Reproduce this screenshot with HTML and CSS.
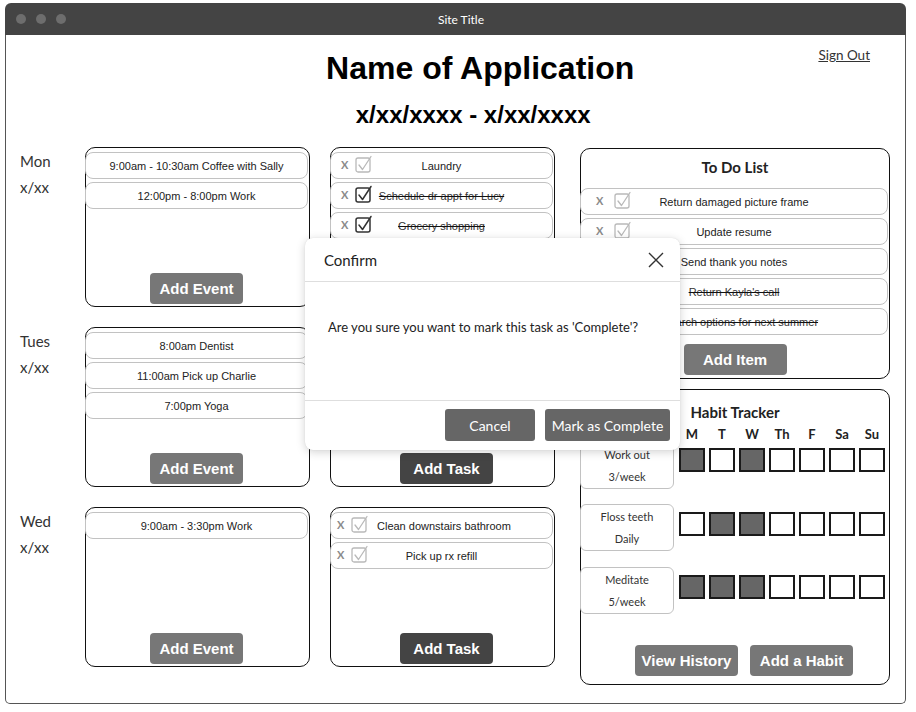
FILE: index.html
```html
<!DOCTYPE html>
<html>
<head>
<meta charset="utf-8">
<title>Site Title</title>
<link rel="stylesheet" href="styles.css">
</head>
<body>
<div class="window">
  <div class="titlebar">
    <div class="dots"><span></span><span></span><span></span></div>
    <div class="site-title">Site Title</div>
    <div></div>
  </div>
  <div class="content">
    <header class="header">
      <div class="titles">
        <h1>Name of Application</h1>
        <h2>x/xx/xxxx - x/xx/xxxx</h2>
      </div>
      <a class="signout" href="#">Sign Out</a>
    </header>

    <main class="main">
      <section class="days">
        <div class="day">
          <div class="day-label">Mon<br>x/xx</div>
          <div class="panel events">
            <div class="item">9:00am - 10:30am Coffee with Sally</div>
            <div class="item">12:00pm - 8:00pm Work</div>
            <button class="btn btn-light">Add Event</button>
          </div>
          <div class="panel tasks tasks-a">
            <div class="item task"><span class="tctl"><span class="x">X</span><svg class="cb off" viewBox="0 0 18 20"><rect x="1" y="4" width="14" height="14" rx="2"/><path d="M4 11 L7.5 15.5 L16 2.5"/></svg></span><span class="ttext">Laundry</span><span></span></div>
            <div class="item task"><span class="tctl"><span class="x">X</span><svg class="cb on" viewBox="0 0 18 20"><rect x="1" y="4" width="14" height="14" rx="2"/><path d="M4 11 L7.5 15.5 L16 2.5"/></svg></span><span class="ttext done">Schedule dr appt for Lucy</span><span></span></div>
            <div class="item task"><span class="tctl"><span class="x">X</span><svg class="cb on" viewBox="0 0 18 20"><rect x="1" y="4" width="14" height="14" rx="2"/><path d="M4 11 L7.5 15.5 L16 2.5"/></svg></span><span class="ttext done">Grocery shopping</span><span></span></div>
            <button class="btn btn-dark">Add Task</button>
          </div>
        </div>

        <div class="day">
          <div class="day-label">Tues<br>x/xx</div>
          <div class="panel events">
            <div class="item">8:00am Dentist</div>
            <div class="item">11:00am Pick up Charlie</div>
            <div class="item">7:00pm Yoga</div>
            <button class="btn btn-light">Add Event</button>
          </div>
          <div class="panel tasks tasks-a">
            <div class="item task"><span class="tctl"><span class="x">X</span><svg class="cb off" viewBox="0 0 18 20"><rect x="1" y="4" width="14" height="14" rx="2"/><path d="M4 11 L7.5 15.5 L16 2.5"/></svg></span><span class="ttext">Call the plumber</span><span></span></div>
            <div class="item task"><span class="tctl"><span class="x">X</span><svg class="cb off" viewBox="0 0 18 20"><rect x="1" y="4" width="14" height="14" rx="2"/><path d="M4 11 L7.5 15.5 L16 2.5"/></svg></span><span class="ttext">Pay bills</span><span></span></div>
            <button class="btn btn-dark">Add Task</button>
          </div>
        </div>

        <div class="day">
          <div class="day-label">Wed<br>x/xx</div>
          <div class="panel events">
            <div class="item">9:00am - 3:30pm Work</div>
            <button class="btn btn-light">Add Event</button>
          </div>
          <div class="panel tasks tasks-b">
            <div class="item task"><span class="tctl"><span class="x">X</span><svg class="cb off" viewBox="0 0 18 20"><rect x="1" y="4" width="14" height="14" rx="2"/><path d="M4 11 L7.5 15.5 L16 2.5"/></svg></span><span class="ttext">Clean downstairs bathroom</span><span></span></div>
            <div class="item task"><span class="tctl"><span class="x">X</span><svg class="cb off" viewBox="0 0 18 20"><rect x="1" y="4" width="14" height="14" rx="2"/><path d="M4 11 L7.5 15.5 L16 2.5"/></svg></span><span class="ttext">Pick up rx refill</span><span></span></div>
            <button class="btn btn-dark">Add Task</button>
          </div>
        </div>
      </section>

      <aside class="side">
        <div class="panel todo tasks-c">
          <div class="box-title">To Do List</div>
          <div class="item task"><span class="tctl"><span class="x">X</span><svg class="cb off" viewBox="0 0 18 20"><rect x="1" y="4" width="14" height="14" rx="2"/><path d="M4 11 L7.5 15.5 L16 2.5"/></svg></span><span class="ttext">Return damaged picture frame</span><span></span></div>
          <div class="item task"><span class="tctl"><span class="x">X</span><svg class="cb off" viewBox="0 0 18 20"><rect x="1" y="4" width="14" height="14" rx="2"/><path d="M4 11 L7.5 15.5 L16 2.5"/></svg></span><span class="ttext">Update resume</span><span></span></div>
          <div class="item task"><span class="tctl"><span class="x">X</span><svg class="cb off" viewBox="0 0 18 20"><rect x="1" y="4" width="14" height="14" rx="2"/><path d="M4 11 L7.5 15.5 L16 2.5"/></svg></span><span class="ttext">Send thank you notes</span><span></span></div>
          <div class="item task"><span class="tctl"><span class="x">X</span><svg class="cb on" viewBox="0 0 18 20"><rect x="1" y="4" width="14" height="14" rx="2"/><path d="M4 11 L7.5 15.5 L16 2.5"/></svg></span><span class="ttext done">Return Kayla's call</span><span></span></div>
          <div class="item task"><span class="tctl"><span class="x">X</span><svg class="cb on" viewBox="0 0 18 20"><rect x="1" y="4" width="14" height="14" rx="2"/><path d="M4 11 L7.5 15.5 L16 2.5"/></svg></span><span class="ttext done">Research options for next summer</span><span></span></div>
          <button class="btn btn-light btn-wide">Add Item</button>
        </div>

        <div class="panel habits">
          <div class="box-title habit-title">Habit Tracker</div>
          <div class="habit-grid">
            <span></span>
            <span class="dname">M</span><span class="dname">T</span><span class="dname">W</span><span class="dname">Th</span><span class="dname">F</span><span class="dname">Sa</span><span class="dname">Su</span>

            <div class="hlabel">Work out<br>3/week</div>
            <span class="sq fill"></span><span class="sq"></span><span class="sq fill"></span><span class="sq"></span><span class="sq"></span><span class="sq"></span><span class="sq"></span>

            <div class="hlabel">Floss teeth<br>Daily</div>
            <span class="sq"></span><span class="sq fill"></span><span class="sq fill"></span><span class="sq"></span><span class="sq"></span><span class="sq"></span><span class="sq"></span>

            <div class="hlabel">Meditate<br>5/week</div>
            <span class="sq fill"></span><span class="sq fill"></span><span class="sq fill"></span><span class="sq"></span><span class="sq"></span><span class="sq"></span><span class="sq"></span>
          </div>
          <div class="habit-actions">
            <button class="btn btn-light btn-wide">View History</button>
            <button class="btn btn-light btn-wide">Add a Habit</button>
          </div>
        </div>
      </aside>
    </main>

    <div class="modal">
      <div class="modal-head">
        <span>Confirm</span>
        <svg class="close" viewBox="0 0 16 16"><path d="M1 1 L15 15 M15 1 L1 15"/></svg>
      </div>
      <div class="modal-body">Are you sure you want to mark this task as 'Complete'?</div>
      <div class="modal-foot">
        <button class="mbtn mbtn-cancel">Cancel</button>
        <button class="mbtn mbtn-ok">Mark as Complete</button>
      </div>
    </div>
  </div>
</div>
</body>
</html>
```

FILE: styles.css
```css
* { box-sizing: border-box; }

body {
  margin: 0;
  padding: 3px 10px 0 5px;
  background: #fff;
  font-family: "Liberation Sans", Arial, sans-serif;
}

.window {
  width: 901px;
  height: 701px;
  display: flex;
  flex-direction: column;
}

.titlebar {
  height: 32px;
  background: #444;
  border-radius: 6px 6px 0 0;
  display: grid;
  grid-template-columns: 1fr auto 1fr;
  align-items: center;
}

.dots { display: flex; gap: 10px; padding-left: 11px; }
.dots span { width: 10px; height: 10px; border-radius: 50%; background: #6d6d6d; }

.site-title {
  color: #fff;
  font: 12px "Lato", sans-serif;
  padding-left: 11px;
}

.content {
  flex: 1;
  position: relative;
  border: 1px solid #555;
  border-top: 0;
  border-radius: 0 0 5px 5px;
  padding: 0 15px 0 14px;
}

/* header */
.header { display: flex; }
.titles { flex: 1; text-align: center; padding-left: 122px; }
.titles h1 {
  margin: 15px 0 0;
  font: bold 32px/37px "Liberation Sans", Arial, sans-serif;
  color: #000;
}
.titles h2 {
  margin: 14px 0 0;
  padding-right: 14px;
  font: bold 24px/28px "Liberation Sans", Arial, sans-serif;
  color: #000;
}
.signout {
  margin: 11px 20px 0 0;
  font: 13.5px/18px "Lato", sans-serif;
  color: #333;
  height: 18px;
  text-decoration: underline;
}

/* main */
.main { display: flex; gap: 25px; margin-top: 18px; }
.days { display: flex; flex-direction: column; gap: 20px; }
.day { display: flex; height: 160px; }
.day-label {
  width: 65px;
  padding-top: 1px;
  font: 15px/26px "Lato", sans-serif;
  color: #333;
}

.panel {
  width: 225px;
  border: 1px solid #111;
  border-radius: 10px;
  display: flex;
  flex-direction: column;
  padding: 4px 0 2px;
}
.tasks { margin-left: 20px; }

.item {
  height: 27px;
  margin: 0 1px 3px -1px;
  border: 1px solid #c2c2c2;
  border-radius: 8px;
  font: 11px/26px "Liberation Sans", Arial, sans-serif;
  color: #222;
  text-align: center;
  white-space: nowrap;
}

.task {
  display: grid;
  grid-template-columns: 46px 1fr 46px;
  align-items: center;
}
.tctl { display: flex; align-items: center; gap: 7px; padding-left: 10px; }
.tasks-b .tctl { padding-left: 6px; }
.tasks-c .task { grid-template-columns: 56px 1fr 56px; }
.tasks-c .tctl { padding-left: 15px; gap: 11px; }

.x {
  font: bold 11px/1 "Lato", sans-serif;
  color: #8a8a8a;
  margin-top: -3px;
}
.cb { width: 18px; height: 20px; margin-top: -4px; fill: none; stroke-width: 1.3; stroke-linecap: round; stroke-linejoin: round; }
.cb.off { stroke: #b9b9b9; }
.cb.on { stroke: #333; stroke-width: 1.5; }
.done { text-decoration: line-through; color: #333; text-decoration-color: #111; }

.btn {
  margin: auto auto 0;
  width: 93px;
  height: 31px;
  padding: 0;
  border: 0;
  border-radius: 4px;
  font: bold 15px/31px "Liberation Sans", Arial, sans-serif;
  color: #fff;
  text-align: center;
}
.events .btn { margin: auto 0 0 64px; }
.tasks .btn { margin: auto 0 0 69px; }
.btn-light { background: #777; }
.btn-dark { background: #444; }
.btn-wide { width: 103px; }

/* side */
.side { width: 310px; display: flex; flex-direction: column; gap: 10px; margin-top: 1px; }
.todo { width: 310px; height: 231px; padding: 5px 0 3px; }
.box-title {
  font: bold 15px/26px "Lato", sans-serif;
  color: #222;
  text-align: center;
  margin-bottom: 8px;
}

.habits { width: 310px; height: 296px; padding: 10px 0 8px; }
.habit-title { margin-bottom: 0; line-height: 24px; }

.habit-grid {
  display: grid;
  grid-template-columns: 95px repeat(7, 26px);
  grid-template-rows: 16px 47px 63px 63px;
  column-gap: 4px;
  margin-top: 2px;
  margin-left: -1px;
}
.dname {
  font: bold 13px/16px "Lato", sans-serif;
  color: #222;
  text-align: center;
}
.hlabel {
  width: 94px;
  height: 47px;
  border: 1px solid #c2c2c2;
  border-radius: 6px;
  font: 11px/22px "Lato", sans-serif;
  color: #333;
  text-align: center;
  padding-top: 1px;
}
.sq {
  width: 26px;
  height: 24px;
  border: 2px solid #1a1a1a;
  background: #fff;
  align-self: start;
  margin-top: 6px;
}
.sq.fill { background: #666; }
.habit-grid > .hlabel ~ .hlabel { margin-top: 15px; }
.habit-grid > .hlabel ~ .hlabel ~ .sq { margin-top: 23px; }

.habit-actions {
  margin-top: auto;
  display: flex;
  gap: 12px;
  padding-left: 54px;
}
.habit-actions .btn { margin: 0; }

/* modal */
.modal {
  position: absolute;
  left: 299px;
  top: 203px;
  width: 375px;
  height: 212px;
  background: #fff;
  border-radius: 8px;
  box-shadow: 0 2px 10px rgba(0, 0, 0, 0.18), 0 0 1px rgba(0, 0, 0, 0.15);
  display: flex;
  flex-direction: column;
  font-family: "Lato", sans-serif;
}
.modal-head {
  height: 44px;
  display: flex;
  align-items: center;
  justify-content: space-between;
  padding: 0 16px 0 19px;
  border-bottom: 1px solid #dedede;
  font-size: 15px;
  color: #222;
}
.close { width: 16px; height: 16px; stroke: #333; stroke-width: 1.4; fill: none; }
.modal-body {
  flex: 1;
  padding: 37px 23px 0;
  font-size: 13px;
  color: #222;
}
.modal-foot {
  border-top: 1px solid #dedede;
  display: flex;
  justify-content: flex-end;
  gap: 10px;
  padding: 8px 10px 9px;
}
.mbtn {
  height: 32px;
  border: 0;
  border-radius: 3px;
  background: #666;
  color: #fff;
  font: 14px "Lato", sans-serif;
}
.mbtn-cancel { width: 90px; }
.mbtn-ok { width: 125px; }
```
